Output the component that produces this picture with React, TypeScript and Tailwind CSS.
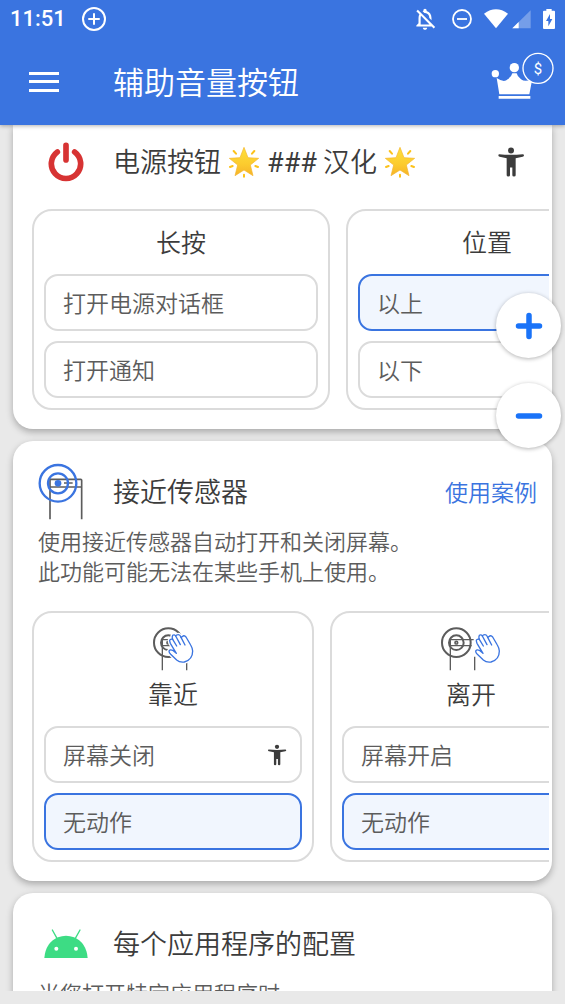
import React from 'react';
import { MdOutlineNotificationsOff } from 'react-icons/md';

function StatusBar() {
  return (
    <div className="flex h-[38px] items-center pr-2.5 pl-2.5 text-white">
      <span className="font-[Roboto,sans-serif] text-[22px] leading-[38px] font-medium">11:51</span>
      <svg className="ml-4 size-6" viewBox="0 0 24 24" fill="none" stroke="currentColor" strokeWidth="2" strokeLinecap="round">
        <circle cx="12" cy="12" r="11" />
        <path d="M12 7v10M7 12h10" />
      </svg>
      <span className="flex-1" />
      <MdOutlineNotificationsOff className="size-[26px]" aria-label="静音" />
      <svg className="ml-3.5 size-5" viewBox="0 0 20 20" fill="none" stroke="currentColor" strokeWidth="1.8">
        <circle cx="10" cy="10" r="9" />
        <path d="M5 10h10" />
      </svg>
      <svg className="ml-3 h-5 w-6" viewBox="0 0 72 60" fill="currentColor">
        <path d="M36 58 0 14Q36-12 72 14Z" />
      </svg>
      <svg className="ml-1 h-5 w-[19px]" viewBox="0 0 57 60" fill="currentColor">
        <path opacity=".3" d="M56 4v54H1Z" />
        <path d="M20 39v19H1Z" />
      </svg>
      <svg className="ml-3 h-5 w-3" viewBox="0 0 36 60" fill="currentColor">
        <path fillRule="evenodd" d="M10 0h16v5h7q3 0 3 3v49q0 3-3 3H3q-3 0-3-3V8q0-3 3-3h7ZM21 15 9 36h7v16l12-22h-7Z" />
      </svg>
    </div>
  );
}

function Crown() {
  return (
    <svg className="h-[47px] w-[63px]" viewBox="628 158 189 141" fill="#fff">
      <circle cx="641" cy="223" r="11" />
      <circle cx="698" cy="205" r="14" />
      <path d="M645 236Q667 251 678 240Q690 232 692 222H705Q707 232 718 240Q732 250 752 238L743 285H653Z" />
      <path d="M651 290h95v8h-95z" />
      <circle cx="769" cy="207" r="45" fill="#3a74e0" stroke="#fff" strokeWidth="4" />
      <text x="769" y="223" textAnchor="middle" fontSize="45" fontWeight="400" fontFamily="Roboto, sans-serif">$</text>
    </svg>
  );
}

function Power() {
  return (
    <svg className="h-10 w-9" viewBox="0 0 108 120" fill="none" stroke="#d73333" strokeWidth="17" strokeLinecap="round">
      <path d="M54 10v44M28 30A44 44 0 1 0 80 30" />
    </svg>
  );
}

function Person({ className }: { className: string }) {
  return (
    <svg className={className} viewBox="642 78 84 93" fill="#3c3c3c">
      <circle cx="684" cy="90" r="9" />
      <path d="M649 101Q684 105 719 101Q723 101 723 105Q723 108 719 109L698 113V164Q698 168 693 168Q688 168 688 164V141H681V164Q681 168 676 168Q671 168 671 164V113L650 109Q646 108 646 104Q646 101 649 101Z" />
    </svg>
  );
}

function Star() {
  return (
    <svg className="mx-px inline-block size-8 align-[-6px]" viewBox="0 0 96 96" role="img" aria-label="星">
      <defs>
        <linearGradient id="starFill" x1="0" y1="0" x2="0" y2="1">
          <stop offset="0" stopColor="#fde03c" />
          <stop offset=".6" stopColor="#fccb2e" />
          <stop offset="1" stopColor="#f5b32a" />
        </linearGradient>
      </defs>
      <path d="M48 4 60 35 92 37 67 57 75 89 48 72 21 89 29 57 4 37 36 35Z" fill="url(#starFill)" stroke="#f4b42b" strokeWidth="2" strokeLinejoin="round" />
      <g stroke="#fcc21b" strokeWidth="6" strokeLinecap="round">
        <path d="m17 15 7 8M79 15l-7 8M6 63l8-3M90 63l-8-3M48 86v6" />
      </g>
    </svg>
  );
}

function Sensor() {
  return (
    <svg className="h-[57px] w-[46px]" viewBox="114 250 138 171" fill="none">
      <path d="M150 419V299H242Q245 299 245 302V419M150 322H245M192 310H218" stroke="#5c5c5c" strokeWidth="5" />
      <g stroke="#3a74e0" strokeWidth="7">
        <circle cx="174" cy="311" r="55" />
        <circle cx="174" cy="311" r="30" />
      </g>
      <circle cx="174" cy="311" r="10" fill="#3a74e0" />
    </svg>
  );
}

const handPath =
  'M23 57 12 48Q4 44 1 50Q1 55 6 60L24 77Q33 85 47 83Q72 76 72 50Q71 40 66 32L52 8Q46 1 41 7L37 9Q34 1 29 1Q23 1 21 5Q17-1 12 3Q9 8 12 15Q5 13 3 18Q3 22 5 27L23 57';

function HandSensor({ away }: { away?: boolean }) {
  return (
    <svg className={away ? 'h-11 w-[60px]' : 'h-11 w-[41px]'} viewBox={away ? '-46 -47 180 132' : '-46 -47 123 132'} fill="none">
      <g stroke="#5c5c5c">
        <circle r="43" strokeWidth="6" />
        <circle r="22" strokeWidth="6" />
        <path d="M-18 83V-9H52M-16 9H46M55 42V83" strokeWidth="4" />
        <circle r="4" strokeWidth="5" />
      </g>
      <g transform={away ? 'translate(57 -25)' : 'translate(1 -25)'} strokeLinecap="round" strokeLinejoin="round">
        <path d={handPath} fill="#fff" stroke="#fff" strokeWidth="12" />
        <path d={handPath} stroke="#3a74e0" strokeWidth="4" />
        <path d="M12 15 24 35M21 5 35 31M37 9 49 32" stroke="#3a74e0" strokeWidth="4" />
      </g>
    </svg>
  );
}

function Android() {
  return (
    <svg className="h-[29px] w-11" viewBox="0 0 132 87" fill="#3ddc84">
      <path d="M1 87Q5 41 42 25Q66 15 90 25Q127 41 131 87Z" />
      <path d="M25 3 39 28M108 3 94 28" stroke="#3ddc84" strokeWidth="4" strokeLinecap="round" />
      <circle cx="37" cy="59" r="6" fill="#fff" />
      <circle cx="96" cy="59" r="6" fill="#fff" />
    </svg>
  );
}

type Choice = { label: string; selected?: boolean; person?: boolean };

function Group({ title, choices, icon, wide }: { title: string; choices: Choice[]; icon?: React.ReactNode; wide?: boolean }) {
  return (
    <section className={`${wide ? 'w-[298px]' : 'w-[282px]'} shrink-0 rounded-[20px] border-2 border-[#dbdbdb] px-2.5 pb-2.5`}>
      <div className={icon ? 'flex h-[113px] flex-col items-center pt-3.5' : 'flex h-[63px] flex-col items-center pt-2'}>
        {icon}
        <h3 className="text-[25px] leading-[44px]">{title}</h3>
      </div>
      <div className="flex flex-col gap-2.5">
        {choices.map((c) => (
          <button
            key={c.label}
            type="button"
            aria-pressed={!!c.selected}
            className={`flex h-[57px] items-center justify-between rounded-[14px] border-2 pr-[13px] pl-[17px] text-[23px] text-[#5c5c5c] ${
              c.selected ? 'border-[#3a74e0] bg-[#f1f6fe]' : 'border-[#dbdbdb] bg-white'
            }`}
          >
            {c.label}
            {c.person && <Person className="h-[22px] w-5" />}
          </button>
        ))}
      </div>
    </section>
  );
}

function Card({ first, children }: { first?: boolean; children: React.ReactNode }) {
  return (
    <article className={`shrink-0 bg-white shadow-[0_3px_7px_rgba(0,0,0,0.28)] ${first ? 'rounded-b-[20px]' : 'rounded-[20px]'}`}>
      {children}
    </article>
  );
}

function Strip({ children }: { children: React.ReactNode }) {
  return <div className="mr-[3px] flex gap-4 overflow-hidden pb-[19px] pl-[19px]">{children}</div>;
}

function CardHead({ icon, title, children }: { icon: React.ReactNode; title: React.ReactNode; children?: React.ReactNode }) {
  return (
    <div className="flex h-[60px] items-center pr-[15px] pl-[25px]">
      <div className="flex w-[75px] shrink-0">{icon}</div>
      <h2 className="flex-1 text-[27px] whitespace-nowrap">{title}</h2>
      {children}
    </div>
  );
}

export default function App() {
  return (
    <div
      className="relative flex h-screen flex-col overflow-hidden bg-[#e9e9e9] font-[350] text-[#3c3c3c]"
      style={{ fontFamily: '"Noto Sans CJK SC", sans-serif' }}
    >
      <header className="z-10 shrink-0 bg-[#3a74e0] shadow-[0_1px_4px_rgba(0,0,0,0.3)]">
        <StatusBar />
        <div className="flex h-[87px] items-center pr-[11px] pl-[29px] text-white">
          <button type="button" aria-label="菜单" className="flex h-5 w-[30px] flex-col justify-between">
            <span className="h-[3px] w-full bg-white" />
            <span className="h-[3px] w-full bg-white" />
            <span className="h-[3px] w-full bg-white" />
          </button>
          <h1 className="ml-[54px] flex-1 text-[31px]">辅助音量按钮</h1>
          <a href="#premium" aria-label="高级版" className="pb-3">
            <Crown />
          </a>
        </div>
      </header>

      <main className="flex min-h-0 flex-1 flex-col gap-3 overflow-hidden px-[13px]">
        <Card first>
          <div className="pt-[7px] pb-[17px]">
            <CardHead
              icon={<span className="pl-2.5"><Power /></span>}
              title={<>电源按钮 <Star /> <span className="font-[Roboto,sans-serif] font-normal">###</span> 汉化 <Star /></>}
            >
              <span className="pr-3"><Person className="h-8 w-7" /></span>
            </CardHead>
          </div>
          <Strip>
            <Group wide title="长按" choices={[{ label: '打开电源对话框' }, { label: '打开通知' }]} />
            <Group title="位置" choices={[{ label: '以上', selected: true }, { label: '以下' }]} />
          </Strip>
        </Card>

        <Card>
          <div className="pt-5 pb-[26px]">
            <CardHead icon={<Sensor />} title="接近传感器">
              <a href="#usage" className="text-[23px] text-[#3a74e0]">使用案例</a>
            </CardHead>
            <p className="mt-1 px-[25px] text-[22px] leading-[30px] text-[#5c5c5c]">
              使用接近传感器自动打开和关闭屏幕。
              <br />
              此功能可能无法在某些手机上使用。
            </p>
          </div>
          <Strip>
            <Group icon={<HandSensor />} title="靠近" choices={[{ label: '屏幕关闭', person: true }, { label: '无动作', selected: true }]} />
            <Group icon={<HandSensor away />} title="离开" choices={[{ label: '屏幕开启' }, { label: '无动作', selected: true }]} />
          </Strip>
        </Card>

        <Card>
          <div className="pt-5 pb-[26px]">
            <CardHead icon={<span className="pl-1.5"><Android /></span>} title="每个应用程序的配置" />
            <p className="mt-1 px-[25px] text-[22px] leading-[30px] text-[#5c5c5c]">当您打开特定应用程序时</p>
          </div>
        </Card>
      </main>
      <div className="h-[13px] shrink-0" />

      <div className="absolute top-[293px] right-1 z-20 flex flex-col gap-[25px]">
        <button type="button" aria-label="增大音量" className="flex size-[65px] items-center justify-center rounded-full bg-white shadow-[0_1px_4px_rgba(0,0,0,0.3)]">
          <svg className="size-7" viewBox="0 0 28 28" stroke="#1a73f8" strokeWidth="5.5" strokeLinecap="round">
            <path d="M14 3.5v21M3.5 14h21" />
          </svg>
        </button>
        <button type="button" aria-label="减小音量" className="flex size-[65px] items-center justify-center rounded-full bg-white shadow-[0_1px_4px_rgba(0,0,0,0.3)]">
          <svg className="size-7" viewBox="0 0 28 28" stroke="#1a73f8" strokeWidth="5.5" strokeLinecap="round">
            <path d="M3.5 14h21" />
          </svg>
        </button>
      </div>
    </div>
  );
}
